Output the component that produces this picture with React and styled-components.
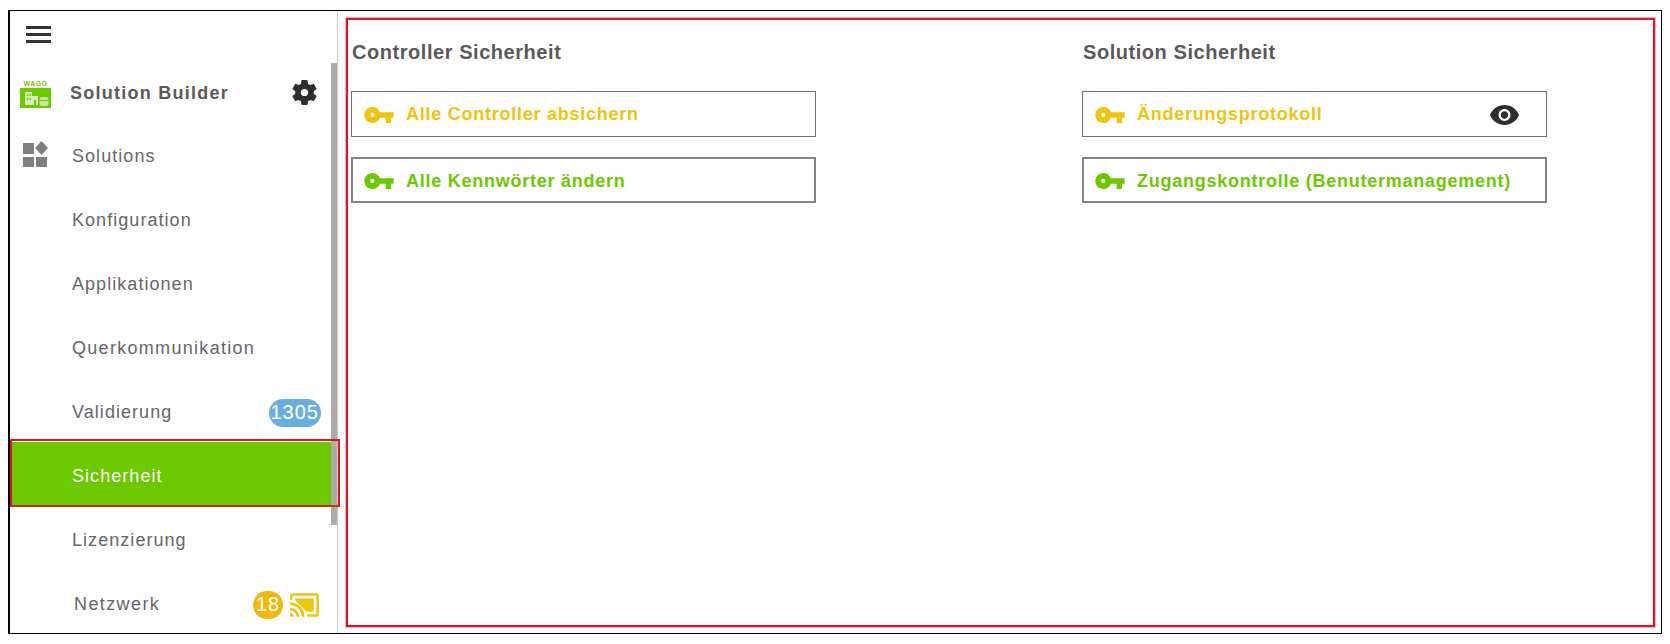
import React from "react";
import styled, { createGlobalStyle } from "styled-components";

const GlobalStyle = createGlobalStyle`
  html, body {
    margin: 0;
    background: #fff;
    font-family: "Liberation Sans", Arial, sans-serif;
  }
`;

const YELLOW = "#f0c30f";
const GREEN = "#6cc800";

const KeyIcon = ({ color }) => (
  <svg width="30" height="16" viewBox="1 6 22 12" fill={color} fillRule="evenodd">
    <path d="M12.65 10C11.83 7.67 9.61 6 7 6c-3.31 0-6 2.69-6 6s2.69 6 6 6c2.61 0 4.83-1.67 5.65-4H17v4h4v-4h2v-4H12.65zM7 13.6a1.6 1.6 0 1 1 0-3.2 1.6 1.6 0 0 1 0 3.2z" />
  </svg>
);

const EyeIcon = () => (
  <svg width="29" height="20" viewBox="1 4.5 22 15" fill="#2e2e2e">
    <path d="M12 4.5C7 4.5 2.73 7.61 1 12c1.73 4.39 6 7.5 11 7.5s9.27-3.11 11-7.5c-1.73-4.39-6-7.5-11-7.5zM12 16.5c-2.48 0-4.5-2.02-4.5-4.5s2.02-4.5 4.5-4.5 4.5 2.02 4.5 4.5-2.02 4.5-4.5 4.5zm0-7.3c-1.55 0-2.8 1.25-2.8 2.8s1.25 2.8 2.8 2.8 2.8-1.25 2.8-2.8-1.25-2.8-2.8-2.8z" />
  </svg>
);

const GearIcon = () => (
  <svg width="31" height="31" viewBox="0 0 24 24" fill="#2e2e2e" fillRule="evenodd">
    <path d="M19.14 12.94c.04-.3.06-.61.06-.94 0-.32-.02-.64-.07-.94l2.03-1.58c.18-.14.23-.41.12-.61l-1.92-3.32c-.12-.22-.37-.29-.59-.22l-2.39.96c-.5-.38-1.03-.7-1.62-.94l-.36-2.54c-.04-.24-.24-.41-.48-.41h-3.84c-.24 0-.43.17-.47.41l-.36 2.54c-.59.24-1.13.57-1.62.94l-2.39-.96c-.22-.08-.47 0-.59.22L2.74 8.87c-.12.21-.08.47.12.61l2.03 1.58c-.05.3-.09.63-.09.94s.02.64.07.94l-2.03 1.58c-.18.14-.23.41-.12.61l1.92 3.32c.12.22.37.29.59.22l2.39-.96c.5.38 1.03.7 1.62.94l.36 2.54c.05.24.24.41.48.41h3.84c.24 0 .44-.17.47-.41l.36-2.54c.59-.24 1.13-.56 1.62-.94l2.39.96c.22.08.47 0 .59-.22l1.92-3.32c.12-.22.07-.47-.12-.61l-2.01-1.58zM12 14.8a2.8 2.8 0 1 1 0-5.6 2.8 2.8 0 0 1 0 5.6z" />
  </svg>
);

const CastIcon = () => (
  <svg width="29" height="24" viewBox="1 3 22 18" fill={YELLOW}>
    <path d="M1 18v3h3c0-1.66-1.34-3-3-3zm0-4v2c2.76 0 5 2.24 5 5h2c0-3.87-3.13-7-7-7zM1 10v2c4.97 0 9 4.03 9 9h2c0-6.08-4.93-11-11-11zm20-7H3c-1.1 0-2 .9-2 2v3h2V5h18v14h-7v2h7c1.1 0 2-.9 2-2V5c0-1.1-.9-2-2-2z" />
    <polygon points="5,7 19,7 19,17 13.37,17 5,8.63" />
  </svg>
);

const MenuIcon = () => (
  <svg width="25" height="17" viewBox="0 0 25 17" fill="#333">
    <rect y="0" width="25" height="3" />
    <rect y="7" width="25" height="3" />
    <rect y="14" width="25" height="3" />
  </svg>
);

const SolutionsIcon = () => (
  <svg width="25" height="26" viewBox="0 0 25 26" fill="#7f7f7f">
    <rect x="0" y="2" width="11" height="11" />
    <rect x="0" y="16" width="11" height="10" />
    <rect x="13" y="16" width="11" height="10" />
    <polygon points="18.5,0 25,7 18.5,14 12,7" />
  </svg>
);

const LogoIcon = () => (
  <svg width="31" height="20" viewBox="0 0 31 20">
    <rect width="31" height="20" fill={GREEN} />
    <rect x="5" y="4" width="7" height="13" fill="#d8f0b8" />
    <rect x="12" y="8" width="6" height="9" fill="#d8f0b8" />
    <rect x="7" y="6" width="1.5" height="2" fill={GREEN} />
    <rect x="9.5" y="6" width="1.5" height="2" fill={GREEN} />
    <rect x="7" y="10" width="1.5" height="2" fill={GREEN} />
    <rect x="9.5" y="10" width="1.5" height="2" fill={GREEN} />
    <rect x="14" y="12" width="2" height="5" fill={GREEN} />
    <rect x="19.5" y="9" width="9" height="9" rx="2" fill="#c4e89a" />
    <rect x="19.5" y="12" width="9" height="1" fill={GREEN} />
  </svg>
);

const Frame = styled.div`
  box-sizing: border-box;
  width: 1654px;
  height: 624px;
  margin: 10px 0 0 8px;
  display: flex;
  overflow: hidden;
  border-style: solid;
  border-color: #000;
  border-width: 1px 1px 1px 2px;
`;

const Sidebar = styled.nav`
  position: relative;
  flex: 0 0 328px;
  box-sizing: border-box;
  border-right: 1px solid #ccc;
`;

const Scrollbar = styled.div`
  position: absolute;
  top: 52px;
  right: 0;
  width: 6px;
  height: 462px;
  background: #aeaca8;
  z-index: 2;
`;

const Burger = styled.div`
  height: 49px;
  box-sizing: border-box;
  padding: 15px 0 0 16px;
`;

const Row = styled.div`
  position: relative;
  height: 64px;
  box-sizing: border-box;
  display: flex;
  align-items: center;
  padding: 1px 16px 0 13px;
  color: #666;
  font-size: 18px;
  letter-spacing: 1.05px;
`;

const ActiveRow = styled(Row)`
  height: 63px;
  margin: -2px 0 3px;
  padding-top: 6px;
  background: ${GREEN};
  color: #fff;
`;

const Highlight = styled.div`
  position: absolute;
  top: -3px;
  left: 0;
  right: -3px;
  bottom: -2px;
  border: 2px solid #dc1423;
  border-bottom-color: #c92d10;
  z-index: 3;
`;

const IconSlot = styled.div`
  flex: 0 0 49px;
  display: flex;
  align-items: center;
  margin-top: ${(p) => p.$lift || 0}px;
`;

const Label = styled.span`
  flex: 1;
  margin-left: ${(p) => p.$shift || 0}px;
  letter-spacing: ${(p) => p.$spacing || "inherit"};
`;

const BuilderLabel = styled(Label)`
  padding-top: 1px;
  font-weight: 700;
  color: #5a5a5a;
  letter-spacing: 1.25px;
`;

const Logo = styled.div`
  margin: 2px 0 0 -3px;
  display: flex;
  flex-direction: column;
  align-items: center;
  line-height: 8px;
  font-size: 7px;
  font-weight: 700;
  letter-spacing: 0.4px;
  color: ${GREEN};
  svg {
    display: block;
  }
`;

const Badge = styled.span`
  box-sizing: border-box;
  height: 28px;
  min-width: 30px;
  padding: 0 2px;
  border-radius: 14px;
  display: flex;
  align-items: center;
  justify-content: center;
  background: ${(p) => p.$bg};
  color: #fff;
  font-size: 20px;
  letter-spacing: 1px;
`;

const NetIcons = styled.div`
  display: flex;
  align-items: center;
  gap: 7px;
  margin-right: 2px;
  svg {
    display: block;
  }
`;

const GearWrap = styled.div`
  display: flex;
  margin-right: 1px;
`;

const Panel = styled.main`
  flex: 1;
  margin: 7px 6px 6px 8px;
  padding: 0 0 0 3px;
  border: 2px solid #dc1423;
  box-shadow: 0 0 0 1px rgba(224, 20, 35, 0.3);
  display: grid;
  grid-template-columns: 731px 1fr;
  align-content: start;
`;

const Column = styled.section`
  display: flex;
  flex-direction: column;
  gap: 20px;
`;

const Title = styled.h2`
  margin: 21px 0 8px;
  padding-left: 1px;
  height: 22px;
  line-height: 22px;
  font-size: 20px;
  font-weight: 700;
  letter-spacing: 0.55px;
  color: #5a5a5a;
`;

const ActionBox = styled.div`
  box-sizing: border-box;
  width: 465px;
  height: 46px;
  border: ${(p) => (p.$thin ? "1px solid #707070" : "2px solid #848484")};
  display: flex;
  align-items: center;
  padding: 1px 27px 0 ${(p) => (p.$thin ? 12 : 11)}px;
  gap: 12px;
  color: ${(p) => p.$color};
  font-size: 18px;
  font-weight: 700;
  letter-spacing: 0.75px;
`;

const ActionText = styled.span`
  flex: 1;
  padding-top: ${(p) => (p.$low ? 2 : 0)}px;
`;

const App = () => (
  <>
    <GlobalStyle />
    <Frame>
      <Sidebar>
        <Scrollbar />
        <Burger>
          <MenuIcon />
        </Burger>
        <Row>
          <IconSlot>
            <Logo>
              WAGO
              <LogoIcon />
            </Logo>
          </IconSlot>
          <BuilderLabel $shift={-2}>Solution Builder</BuilderLabel>
          <GearWrap>
            <GearIcon />
          </GearWrap>
        </Row>
        <Row>
          <IconSlot $lift={-5}>
            <SolutionsIcon />
          </IconSlot>
          <Label>Solutions</Label>
        </Row>
        <Row>
          <IconSlot />
          <Label>Konfiguration</Label>
        </Row>
        <Row>
          <IconSlot />
          <Label>Applikationen</Label>
        </Row>
        <Row>
          <IconSlot />
          <Label $spacing="1.3px">Querkommunikation</Label>
        </Row>
        <Row>
          <IconSlot />
          <Label>Validierung</Label>
          <Badge $bg="#6aaede">1305</Badge>
        </Row>
        <ActiveRow>
          <IconSlot />
          <Label>Sicherheit</Label>
          <Highlight />
        </ActiveRow>
        <Row>
          <IconSlot />
          <Label>Lizenzierung</Label>
        </Row>
        <Row>
          <IconSlot />
          <Label $shift={2} $spacing="1.4px">Netzwerk</Label>
          <NetIcons>
            <Badge $bg="#f0b90f">18</Badge>
            <CastIcon />
          </NetIcons>
        </Row>
      </Sidebar>
      <Panel>
        <Column>
          <Title>Controller Sicherheit</Title>
          <ActionBox $thin $color={YELLOW}>
            <KeyIcon color={YELLOW} />
            <ActionText>Alle Controller absichern</ActionText>
          </ActionBox>
          <ActionBox $color={GREEN}>
            <KeyIcon color={GREEN} />
            <ActionText $low>Alle Kennwörter ändern</ActionText>
          </ActionBox>
        </Column>
        <Column>
          <Title>Solution Sicherheit</Title>
          <ActionBox $thin $color={YELLOW}>
            <KeyIcon color={YELLOW} />
            <ActionText>Änderungsprotokoll</ActionText>
            <EyeIcon />
          </ActionBox>
          <ActionBox $color={GREEN}>
            <KeyIcon color={GREEN} />
            <ActionText $low>Zugangskontrolle (Benutermanagement)</ActionText>
          </ActionBox>
        </Column>
      </Panel>
    </Frame>
  </>
);

export default App;
